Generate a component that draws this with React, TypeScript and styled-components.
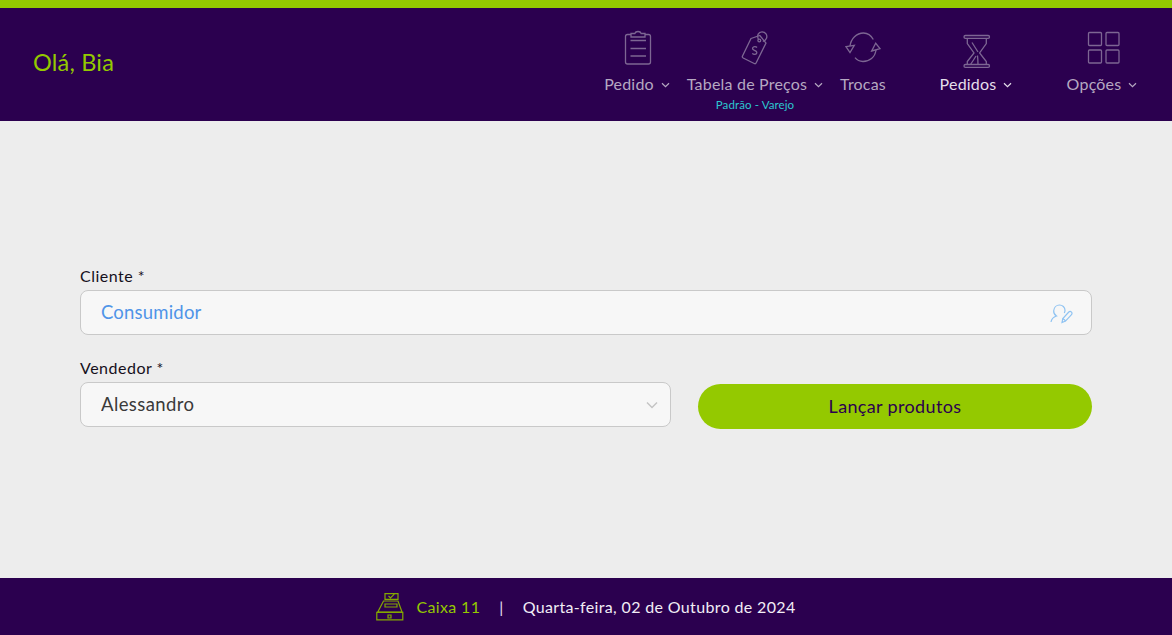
import React from "react";
import styled, { createGlobalStyle } from "styled-components";

const GlobalStyle = createGlobalStyle`
  html, body {
    margin: 0;
    padding: 0;
    height: 100%;
    background: #ededed;
    font-family: "Lato", "Noto Sans", "Liberation Sans", sans-serif;
  }
  #root { height: 100%; }
`;

const purple = "#2b004f";
const green = "#94c900";

const Page = styled.div`
  display: flex;
  flex-direction: column;
  height: 635px;
  overflow: hidden;
`;

const Header = styled.header`
  box-sizing: border-box;
  height: 121px;
  flex: none;
  border-top: 8px solid ${green};
  background: ${purple};
  padding: 0 26px 0 33px;
  display: flex;
  align-items: flex-start;
  justify-content: space-between;
`;

const Greeting = styled.div`
  margin-top: 39px;
  color: ${green};
  font-size: 23.5px;
  line-height: 30px;
  letter-spacing: 0.2px;
`;

const Nav = styled.nav`
  display: flex;
`;

const NavItem = styled.a<{ $width: number; $active?: boolean }>`
  width: ${(props) => props.$width}px;
  padding-top: 22px;
  display: flex;
  flex-direction: column;
  align-items: center;
  color: ${(props) => (props.$active ? "#e4deea" : "#b5a8c1")};
  cursor: pointer;
`;

const NavIcon = styled.svg<{ $active?: boolean }>`
  display: block;
  width: 36px;
  height: 36px;
  overflow: visible;
  fill: none;
  stroke: ${(props) => (props.$active ? "#9a84ad" : "#7d6693")};
  stroke-width: 1.3;
`;

const NavLabel = styled.span`
  margin-top: 8px;
  display: flex;
  align-items: center;
  gap: 7px;
  font-size: 16px;
  line-height: 20px;
  letter-spacing: 0.2px;
  white-space: nowrap;
`;

const Chevron = styled.svg`
  width: 9px;
  height: 6px;
  margin-top: 2px;
  fill: none;
  stroke: currentColor;
  stroke-width: 1.2;
`;

const SubLabel = styled.span`
  margin-top: 4px;
  color: #2cc7cf;
  font-size: 11.5px;
  line-height: 14px;
  letter-spacing: 0.1px;
  white-space: nowrap;
`;

const Main = styled.main`
  flex: 1;
  box-sizing: border-box;
  padding: 0 80px 6px;
  display: flex;
  flex-direction: column;
  justify-content: center;
  gap: 23px;
`;

const Row = styled.div`
  display: flex;
  align-items: flex-end;
  gap: 27px;
`;

const Field = styled.label<{ $width?: number }>`
  display: flex;
  flex-direction: column;
  gap: 4px;
  flex: ${(props) => (props.$width ? `0 0 ${props.$width}px` : "none")};
  color: #16101c;
  font-size: 16px;
  line-height: 20px;
  letter-spacing: 0.5px;
`;

const Control = styled.div`
  position: relative;
`;

const Input = styled.input<{ $blue?: boolean }>`
  box-sizing: border-box;
  width: 100%;
  height: 45px;
  padding: 0 20px 2px;
  display: block;
  border: 1px solid #c9c9c9;
  border-radius: 8px;
  background: #f7f7f7;
  outline: none;
  color: ${(props) => (props.$blue ? "#4f94e8" : "#3a3a3a")};
  font-family: inherit;
  font-size: 18.5px;
  letter-spacing: ${(props) => (props.$blue ? "0.2px" : "0.4px")};
`;

const TrailingIcon = styled.svg`
  position: absolute;
  top: 50%;
  transform: translateY(-50%);
  fill: none;
`;

const UserEditIcon = styled(TrailingIcon)`
  right: 18px;
  width: 26px;
  height: 26px;
  stroke: #8fc3f2;
  stroke-width: 1.2;
`;

const SelectArrow = styled(TrailingIcon)`
  right: 13px;
  width: 12px;
  height: 8px;
  stroke: #c4c4c4;
  stroke-width: 1.5;
`;

const SubmitButton = styled.button`
  flex: 1;
  height: 45px;
  margin-bottom: -2px;
  padding: 0 0 2px;
  border: none;
  border-radius: 23px;
  background: ${green};
  color: ${purple};
  font-family: inherit;
  font-size: 18px;
  letter-spacing: 0.35px;
  cursor: pointer;
`;

const Footer = styled.footer`
  box-sizing: border-box;
  height: 57px;
  flex: none;
  padding-top: 1px;
  background: ${purple};
  display: flex;
  align-items: center;
  justify-content: center;
  font-size: 16px;
  line-height: 20px;
  letter-spacing: 0.35px;
`;

const RegisterIcon = styled.svg`
  width: 28px;
  height: 28px;
  margin: 0 12px 0 0;
  fill: none;
  stroke: #84a800;
  stroke-width: 1.2;
`;

const RegisterName = styled.span`
  color: ${green};
`;

const Separator = styled.span`
  margin: 0 19px;
  color: #e8e0ee;
`;

const DateText = styled.span`
  color: #f1edf5;
`;

function NavChevron() {
  return (
    <Chevron viewBox="0 0 9 6">
      <path d="M1 1.200 4.500 4.600 8 1.200" />
    </Chevron>
  );
}

export default function App() {
  return (
    <Page>
      <GlobalStyle />
      <Header>
        <Greeting>Olá, Bia</Greeting>
        <Nav>
          <NavItem $width={82}>
            <NavIcon viewBox="0 0 36 36">
              <path d="M12 4.500H8.500a2 2 0 0 0-2 2V32a2 2 0 0 0 2 2h21a2 2 0 0 0 2-2V6.500a2 2 0 0 0-2-2H26" />
              <path d="M12 3.500h3.800C16.300 2 17.500 1.500 19 1.500s2.700.5 3.200 2H26v3.500H12z" />
              <path d="M11.500 10.500H27M11.500 18.500H27M11.500 26H27" />
            </NavIcon>
            <NavLabel>
              Pedido <NavChevron />
            </NavLabel>
          </NavItem>
          <NavItem $width={154}>
            <NavIcon viewBox="0 0 36 36">
              <path d="M14 8.500 22.800 5.500 29 13 19.200 32.800a1.500 1.500 0 0 1-2 .7L6.200 28a1.500 1.500 0 0 1-.7-2z" />
              <circle cx="22.300" cy="10.500" r="1.400" />
              <path d="M21.500 9.500C19.500 5.500 21.500 1.800 25 1.800c3.500 0 5.700 3.200 4.500 6.500-.7 1.800-2 2.800-3.700 3.100" />
              <path d="M20 17.500c-1-1.300-3.600-1.300-4.300.2-.7 1.600 1 2.400 2.200 2.900 1.300.6 2.400 1.400 1.700 2.800-.7 1.400-3.200 1.300-4.300 0" />
            </NavIcon>
            <NavLabel>
              Tabela de Preços <NavChevron />
            </NavLabel>
            <SubLabel>Padrão - Varejo</SubLabel>
          </NavItem>
          <NavItem $width={62}>
            <NavIcon viewBox="0 0 36 36">
              <path d="M5 16C6 8.500 11.500 3 18.500 3c4 0 7.500 2.300 9.800 6.500" />
              <path d="M1 16.700 9.300 15.300 5 22.500z" />
              <path d="M31 20C30 27.500 24.500 31.500 18 31.500c-3 0-6-1.300-8-3.800" />
              <path d="M26.700 21 35 18.700 30.700 13.300z" />
            </NavIcon>
            <NavLabel>Trocas</NavLabel>
          </NavItem>
          <NavItem $width={164} $active>
            <NavIcon viewBox="0 0 36 36">
              <rect x="6" y="5.500" width="25.500" height="2.800" rx="1.400" />
              <rect x="6" y="34.500" width="25.500" height="2.800" rx="1.400" />
              <path d="M9.300 8.300v5.200l6.700 9.500-6.700 8.500v3M28.300 8.300v5.200l-6.700 9.500 6.700 8.500v3" />
              <path d="M14 12.500l6 9.500M18 26l-2.500 4-3 4.500M19.500 25.500c.3 3 .5 5.500.5 9" />
            </NavIcon>
            <NavLabel>
              Pedidos <NavChevron />
            </NavLabel>
          </NavItem>
          <NavItem $width={88}>
            <NavIcon viewBox="0 0 36 36">
              <rect x="4.500" y="2.500" width="13" height="13" rx="1" />
              <rect x="22" y="2.500" width="13" height="13" rx="1" />
              <rect x="4.500" y="20" width="13" height="13" rx="1" />
              <rect x="22" y="20" width="13" height="13" rx="1" />
            </NavIcon>
            <NavLabel>
              Opções <NavChevron />
            </NavLabel>
          </NavItem>
        </Nav>
      </Header>
      <Main>
        <Field>
          Cliente *
          <Control>
            <Input $blue readOnly value="Consumidor" />
            <UserEditIcon viewBox="0 0 26 26">
              <path d="M3 22c.5-3 2.500-5 5.500-6-2-1.200-3-3-2.800-5.200C6 7.500 8.500 5 11.500 5s5.500 2.300 5.500 5.200c0 1-.3 1.900-.7 2.700" />
              <path d="M14 22.500l.8-4 6-6.500c.8-.7 2-.6 2.700.1s.7 1.800 0 2.500l-6 6.500z" />
              <path d="M14.800 18.500l3 2.500" />
            </UserEditIcon>
          </Control>
        </Field>
        <Row>
          <Field $width={591}>
            Vendedor *
            <Control>
              <Input readOnly value="Alessandro" />
              <SelectArrow viewBox="0 0 12 8">
                <path d="M1 1.500 6 6.500 11 1.500" />
              </SelectArrow>
            </Control>
          </Field>
          <SubmitButton>Lançar produtos</SubmitButton>
        </Row>
      </Main>
      <Footer>
        <RegisterIcon viewBox="0 0 28 28">
          <path d="M9 .6h13v5.800H9zM12.500 3l2 2 3.800-3.800" />
          <path d="M7.500 8H22l4 11H1.800z" />
          <path d="M9 11h12v3H9z" />
          <path d="M.8 19.300h26v7.500H.8z" />
          <path d="M12 22h3v3h-3z" />
        </RegisterIcon>
        <RegisterName>Caixa 11</RegisterName>
        <Separator>|</Separator>
        <DateText>Quarta-feira, 02 de Outubro de 2024</DateText>
      </Footer>
    </Page>
  );
}
